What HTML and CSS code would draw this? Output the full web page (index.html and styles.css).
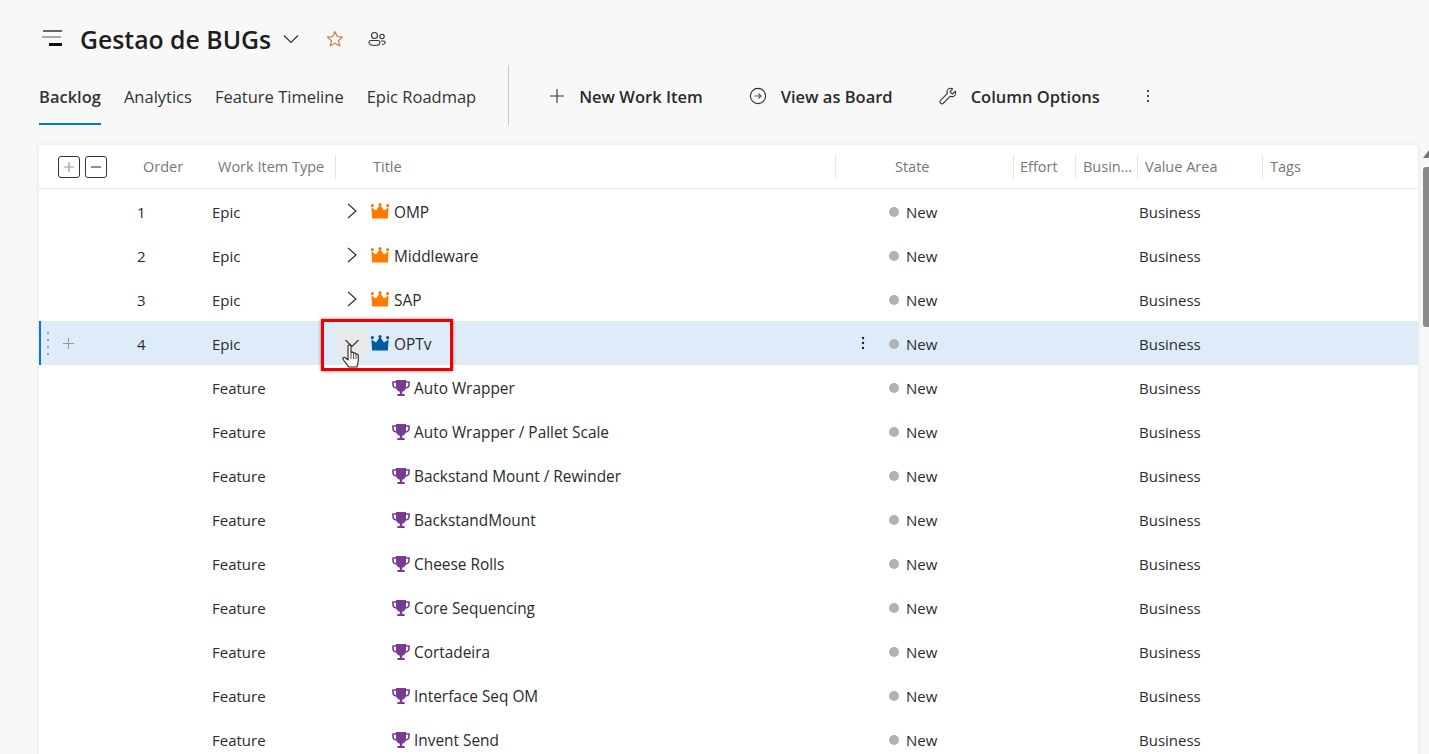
FILE: index.html
```html
<!DOCTYPE html>
<html lang="en">
<head>
  <meta charset="UTF-8" />
  <meta name="viewport" content="width=device-width, initial-scale=1.0"/>
  <title>Gestao de BUGs - Backlog</title>
  <link rel="stylesheet" href="styles.css">
</head>
<body>
  <svg class="defs" width="0" height="0">
    <symbol id="crown" viewBox="0 0 18 16">
      <path d="M1 13.5 0.4 4.500 5 7.600 9 1.800 13 7.600 17.6 4.500 17 13.500Z"/>
      <circle cx="1.400" cy="2.600" r="1.600"/>
      <circle cx="9" cy="1.600" r="1.600"/>
      <circle cx="16.600" cy="2.600" r="1.600"/>
      <rect x="1" y="12.500" width="16" height="3"/>
    </symbol>
    <symbol id="trophy" viewBox="0 0 18 18">
      <path d="M4 1H14V8C14 11 12 12.400 10.200 12.700V15H12.600V17H5.400V15H7.800V12.700C6 12.400 4 11 4 8Z"/>
      <path d="M4 3H1V5.500C1 7.500 2.600 8.800 4.600 9M14 3H17V5.500C17 7.500 15.400 8.800 13.400 9" fill="none" stroke="currentColor" stroke-width="1.600"/>
    </symbol>
    <symbol id="chev-right" viewBox="0 0 12 16">
      <path d="M2 1 10 8 2 15" fill="none" stroke="currentColor" stroke-width="1.200"/>
    </symbol>
  </svg>

  <header class="title-bar">
    <svg class="backlog-icon" width="22" height="18" viewBox="0 0 22 18">
      <rect x="2" y="1" width="19" height="2" fill="#666"/>
      <rect x="1" y="7" width="19" height="2" fill="#aaa"/>
      <rect x="8" y="14" width="13" height="3" fill="#111"/>
    </svg>
    <h1 class="page-title">Gestao de BUGs</h1>
    <svg class="title-chev" width="16" height="10" viewBox="0 0 16 10"><path d="M1 1.500 8 8.500 15 1.500" fill="none" stroke="#333" stroke-width="1.200"/></svg>
    <svg class="star" width="18" height="18" viewBox="0 0 18 18"><path d="M9 1.600 11.200 6.600 16.600 7.100 12.500 10.700 13.800 16 9 13.200 4.200 16 5.500 10.700 1.400 7.100 6.800 6.600Z" fill="none" stroke="#d9784a" stroke-width="1.200" stroke-linejoin="round"/></svg>
    <svg class="people" width="18" height="16" viewBox="0 0 18 16">
      <g fill="none" stroke="#333" stroke-width="1.100">
        <circle cx="6.500" cy="4.500" r="3"/>
        <circle cx="14" cy="5.500" r="2.200"/>
        <path d="M1 11.500C1 10 2 9.500 3 9.500H10C11 9.500 12 10 12 11.500 12 13.500 9.500 14.500 6.500 14.500S1 13.500 1 11.500Z"/>
        <path d="M13 10H15.500C16.500 10 17.300 10.600 17 11.800 16.700 13 15.500 13.500 14 13.500"/>
      </g>
    </svg>
  </header>

  <nav class="toolbar">
    <div class="tabs">
      <a class="tab active">Backlog</a>
      <a class="tab">Analytics</a>
      <a class="tab">Feature Timeline</a>
      <a class="tab">Epic Roadmap</a>
    </div>
    <div class="divider"></div>
    <div class="actions">
      <button class="action">
        <svg width="16" height="16" viewBox="0 0 16 16"><path d="M8 1V15M1 8H15" stroke="#333" stroke-width="1.100"/></svg>
        New Work Item
      </button>
      <button class="action">
        <svg width="18" height="18" viewBox="0 0 18 18"><circle cx="9" cy="9" r="7.600" fill="none" stroke="#333" stroke-width="1.100"/><path d="M5.500 9H12M9.500 6.500 12 9 9.500 11.500" fill="none" stroke="#555" stroke-width="1.100"/></svg>
        View as Board
      </button>
      <button class="action">
        <svg width="18" height="18" viewBox="0 0 18 18"><path d="M11.500 1.200C9.500 1.200 8 2.900 8 4.800 8 5.400 8.100 5.900 8.400 6.400L1.600 13.400C0.800 14.200 0.800 15.400 1.600 16.200 2.400 17 3.600 17 4.400 16.200L11.300 9.200C11.800 9.400 12.300 9.600 12.900 9.600 14.900 9.600 16.600 7.900 16.600 5.900 16.600 5.300 16.500 4.800 16.200 4.300L13.400 7 10.900 4.600 13.600 1.800C13 1.400 12.300 1.200 11.500 1.200Z" fill="none" stroke="#333" stroke-width="1.100" stroke-linejoin="round"/></svg>
        Column Options
      </button>
      <svg class="more" width="4" height="14" viewBox="0 0 4 14"><circle cx="2" cy="2" r="1.100" fill="#222"/><circle cx="2" cy="7" r="1.100" fill="#222"/><circle cx="2" cy="12" r="1.100" fill="#222"/></svg>
    </div>
  </nav>

  <main class="content">
    <section class="card">
      <div class="row head">
        <div class="expanders">
          <span class="square"><svg width="12" height="12" viewBox="0 0 12 12"><path d="M6 1V11M1 6H11" stroke="#999" stroke-width="1.200"/></svg></span>
          <span class="square"><svg width="12" height="12" viewBox="0 0 12 12"><path d="M1 6H11" stroke="#444" stroke-width="1.200"/></svg></span>
        </div>
        <div class="th">Order</div>
        <div class="th sep">Work Item Type</div>
        <div class="th sep th-title">Title</div>
        <div class="th sep th-state">State</div>
        <div class="th sep">Effort</div>
        <div class="th sep th-tight">Busin...</div>
        <div class="th sep th-tight">Value Area</div>
        <div class="th th-tight">Tags</div>
      </div>

      <div class="row">
        <div></div><div class="order">1</div><div>Epic</div>
        <div class="title"><svg class="chev" width="12" height="16"><use href="#chev-right"/></svg><svg class="item-icon crown-orange" width="18" height="16"><use href="#crown"/></svg>OMP</div>
        <div class="state"><i class="dot"></i>New</div><div></div><div></div><div class="value">Business</div><div></div>
      </div>
      <div class="row">
        <div></div><div class="order">2</div><div>Epic</div>
        <div class="title"><svg class="chev" width="12" height="16"><use href="#chev-right"/></svg><svg class="item-icon crown-orange" width="18" height="16"><use href="#crown"/></svg>Middleware</div>
        <div class="state"><i class="dot"></i>New</div><div></div><div></div><div class="value">Business</div><div></div>
      </div>
      <div class="row">
        <div></div><div class="order">3</div><div>Epic</div>
        <div class="title"><svg class="chev" width="12" height="16"><use href="#chev-right"/></svg><svg class="item-icon crown-orange" width="18" height="16"><use href="#crown"/></svg>SAP</div>
        <div class="state"><i class="dot"></i>New</div><div></div><div></div><div class="value">Business</div><div></div>
      </div>
      <div class="row selected">
        <div class="gutter">
          <svg width="4" height="24" viewBox="0 0 4 24"><g fill="#999"><rect x="1" y="1" width="2" height="2"/><rect x="1" y="8" width="2" height="2"/><rect x="1" y="15" width="2" height="2"/><rect x="1" y="22" width="2" height="2"/></g></svg>
          <svg width="11" height="11" viewBox="0 0 11 11"><path d="M5.500 0V11M0 5.500H11" stroke="#a39a8e" stroke-width="1.100"/></svg>
        </div>
        <div class="order">4</div><div>Epic</div>
        <div class="title title-open">
          <span class="chev-hover"><svg width="14" height="9" viewBox="0 0 14 9"><path d="M0.500 1 7 7.500 13.500 1" fill="none" stroke="#333" stroke-width="1.100"/></svg></span>
          <svg class="item-icon crown-blue" width="18" height="16"><use href="#crown"/></svg>OPTv
          <svg class="row-more" width="4" height="14" viewBox="0 0 4 14"><circle cx="2" cy="2" r="1.200" fill="#222"/><circle cx="2" cy="7" r="1.200" fill="#222"/><circle cx="2" cy="12" r="1.200" fill="#222"/></svg>
          <span class="callout"></span>
          <svg class="hand" width="17" height="24" viewBox="0 0 17 24"><path d="M6 2C6 0.500 9 0.500 9 2V8.500C9.800 7.700 11.300 8 11.600 9.300 12.300 8.500 13.800 8.800 14 10.200 14.800 9.700 16.300 10.200 16.300 11.700V16C16.300 19 15.300 20.500 15 23H6.500C6 21 3.500 19 1.200 15.500 0.200 14 1.800 12.600 3.300 13.800L6 16Z" fill="#fff" stroke="#222" stroke-width="1.100" stroke-linejoin="round"/><path d="M9 9V15M11.600 9.500V15M14 10.500V15" stroke="#222" stroke-width="0.800"/></svg>
        </div>
        <div class="state"><i class="dot"></i>New</div><div></div><div></div><div class="value">Business</div><div></div>
      </div>

      <div class="row">
        <div></div><div></div><div>Feature</div>
        <div class="title child"><svg class="item-icon trophy" width="18" height="18"><use href="#trophy"/></svg>Auto Wrapper</div>
        <div class="state"><i class="dot"></i>New</div><div></div><div></div><div class="value">Business</div><div></div>
      </div>
      <div class="row">
        <div></div><div></div><div>Feature</div>
        <div class="title child"><svg class="item-icon trophy" width="18" height="18"><use href="#trophy"/></svg>Auto Wrapper / Pallet Scale</div>
        <div class="state"><i class="dot"></i>New</div><div></div><div></div><div class="value">Business</div><div></div>
      </div>
      <div class="row">
        <div></div><div></div><div>Feature</div>
        <div class="title child"><svg class="item-icon trophy" width="18" height="18"><use href="#trophy"/></svg>Backstand Mount / Rewinder</div>
        <div class="state"><i class="dot"></i>New</div><div></div><div></div><div class="value">Business</div><div></div>
      </div>
      <div class="row">
        <div></div><div></div><div>Feature</div>
        <div class="title child"><svg class="item-icon trophy" width="18" height="18"><use href="#trophy"/></svg>BackstandMount</div>
        <div class="state"><i class="dot"></i>New</div><div></div><div></div><div class="value">Business</div><div></div>
      </div>
      <div class="row">
        <div></div><div></div><div>Feature</div>
        <div class="title child"><svg class="item-icon trophy" width="18" height="18"><use href="#trophy"/></svg>Cheese Rolls</div>
        <div class="state"><i class="dot"></i>New</div><div></div><div></div><div class="value">Business</div><div></div>
      </div>
      <div class="row">
        <div></div><div></div><div>Feature</div>
        <div class="title child"><svg class="item-icon trophy" width="18" height="18"><use href="#trophy"/></svg>Core Sequencing</div>
        <div class="state"><i class="dot"></i>New</div><div></div><div></div><div class="value">Business</div><div></div>
      </div>
      <div class="row">
        <div></div><div></div><div>Feature</div>
        <div class="title child"><svg class="item-icon trophy" width="18" height="18"><use href="#trophy"/></svg>Cortadeira</div>
        <div class="state"><i class="dot"></i>New</div><div></div><div></div><div class="value">Business</div><div></div>
      </div>
      <div class="row">
        <div></div><div></div><div>Feature</div>
        <div class="title child"><svg class="item-icon trophy" width="18" height="18"><use href="#trophy"/></svg>Interface Seq OM</div>
        <div class="state"><i class="dot"></i>New</div><div></div><div></div><div class="value">Business</div><div></div>
      </div>
      <div class="row">
        <div></div><div></div><div>Feature</div>
        <div class="title child"><svg class="item-icon trophy" width="18" height="18"><use href="#trophy"/></svg>Invent Send</div>
        <div class="state"><i class="dot"></i>New</div><div></div><div></div><div class="value">Business</div><div></div>
      </div>
    </section>

    <aside class="scroll">
      <svg width="6" height="9" viewBox="0 0 6 9"><path d="M0 9 6 1V9Z" fill="#777"/></svg>
      <div class="thumb"></div>
    </aside>
  </main>
</body>
</html>
```

FILE: styles.css
```css
html, body {
  height: 100%;
}
body {
  margin: 0;
  height: 754px;
  overflow: hidden;
  background: #f8f8f8;
  color: #222;
  font-family: "Open Sans", "Noto Sans", sans-serif;
  font-size: 14px;
}
.defs {
  position: absolute;
}

/* title */
.title-bar {
  display: flex;
  align-items: center;
  height: 40px;
  padding: 19px 0 0 41px;
}
.backlog-icon {
  margin-right: 17px;
  margin-top: -3px;
}
.page-title {
  margin: 0;
  font-size: 24.8px;
  font-weight: 600;
  color: #1e1e1e;
}
.title-chev {
  margin: 0 0 0 12px;
}
.star {
  margin-left: 27px;
}
.people {
  margin-left: 24px;
}

/* tabs + actions */
.toolbar {
  display: flex;
  align-items: flex-start;
  height: 80px;
  padding: 6px 0 0 39px;
}
.tabs {
  display: flex;
  gap: 23px;
}
.tab {
  display: block;
  height: 60px;
  line-height: 64px;
  font-size: 16.5px;
  color: #333;
  box-sizing: border-box;
}
.tab.active {
  font-weight: 600;
  border-bottom: 2px solid #0078d4;
}
.divider {
  width: 1px;
  height: 60px;
  margin-left: 32px;
  background: #c8c8c8;
}
.actions {
  display: flex;
  align-items: center;
  height: 62px;
  padding-left: 40px;
}
.action {
  display: flex;
  align-items: center;
  gap: 14px;
  margin-right: 46px;
  padding: 0;
  border: 0;
  background: none;
  font: inherit;
  font-size: 16.5px;
  font-weight: 600;
  color: #2b2b2b;
}

/* grid */
.content {
  display: flex;
  padding-left: 39px;
}
.card {
  width: 1379px;
  flex: none;
  background: #fff;
  border-radius: 4px 4px 0 0;
  box-shadow: 0 0 6px rgba(0,0,0,0.08);
}
.row {
  display: grid;
  grid-template-columns: 98px 75px 124px 500px 178px 62px 62px 125px 155px;
  align-items: center;
  box-sizing: border-box;
  height: 44px;
  padding-top: 2px;
  font-size: 15px;
  color: #2b2b2b;
}
.head {
  padding-top: 0;
  border-bottom: 1px solid #e6e6e6;
  font-size: 14.5px;
  color: #777;
}
.expanders {
  display: flex;
  gap: 5px;
  padding-left: 19px;
}
.square {
  display: flex;
  align-items: center;
  justify-content: center;
  box-sizing: border-box;
  width: 22px;
  height: 22px;
  border: 1px solid #333;
  border-radius: 3px;
}
.th {
  padding-left: 6px;
  white-space: nowrap;
  line-height: 24px;
}
.sep {
  border-right: 1px solid #e6e6e6;
}
.th-title {
  padding-left: 37px;
}
.th-state {
  padding-left: 59px;
}
.th-tight {
  padding-left: 7px;
}
.title {
  position: relative;
  display: flex;
  align-items: center;
  height: 100%;
  padding-left: 10px;
  font-size: 15.4px;
}
.title-open {
  padding-left: 0;
}
.child {
  padding-left: 56px;
}
.chev {
  color: #333;
  margin-right: 13px;
  margin-top: -2px;
}
.item-icon {
  margin-right: 5px;
  margin-top: -2px;
  flex: none;
}
.crown-orange {
  fill: #ff7b00;
}
.crown-blue {
  fill: #005a9e;
}
.trophy {
  fill: #773b93;
  color: #773b93;
  margin-right: 4px;
  margin-top: 0;
}
.state {
  display: flex;
  align-items: center;
  padding-left: 53px;
}
.dot {
  width: 10px;
  height: 10px;
  margin-right: 7px;
  border-radius: 50%;
  background: #b2b2b2;
}
.value {
  padding-left: 1px;
}
.selected {
  position: relative;
  background: #deecf9;
}
.selected::before {
  content: "";
  position: absolute;
  left: 0;
  top: 0;
  bottom: 0;
  width: 2px;
  background: #0078d4;
}
.gutter {
  display: flex;
  align-items: center;
  gap: 13px;
  margin-top: -2px;
  padding-left: 7px;
}
.chev-hover {
  display: flex;
  align-items: center;
  justify-content: center;
  width: 30px;
  height: 30px;
  margin-left: 1px;
  margin-right: 4px;
  margin-top: -2px;
  background: #e9e9e9;
  border-radius: 2px;
}
.row-more {
  position: absolute;
  left: 525px;
  top: 13px;
}
.callout {
  position: absolute;
  left: -15px;
  top: -4px;
  box-sizing: border-box;
  width: 132px;
  height: 52px;
  border: 3px solid #ee0000;
  box-shadow: 0 0 3px rgba(0,0,0,0.5);
}
.hand {
  position: absolute;
  left: 6px;
  top: 21px;
}

/* scrollbar */
.scroll {
  display: flex;
  flex-direction: column;
  gap: 9px;
  padding: 4px 0 0 5px;
}
.thumb {
  width: 6px;
  height: 160px;
  background: #8a8a8a;
  border-radius: 3px 0 0 3px;
}
```
